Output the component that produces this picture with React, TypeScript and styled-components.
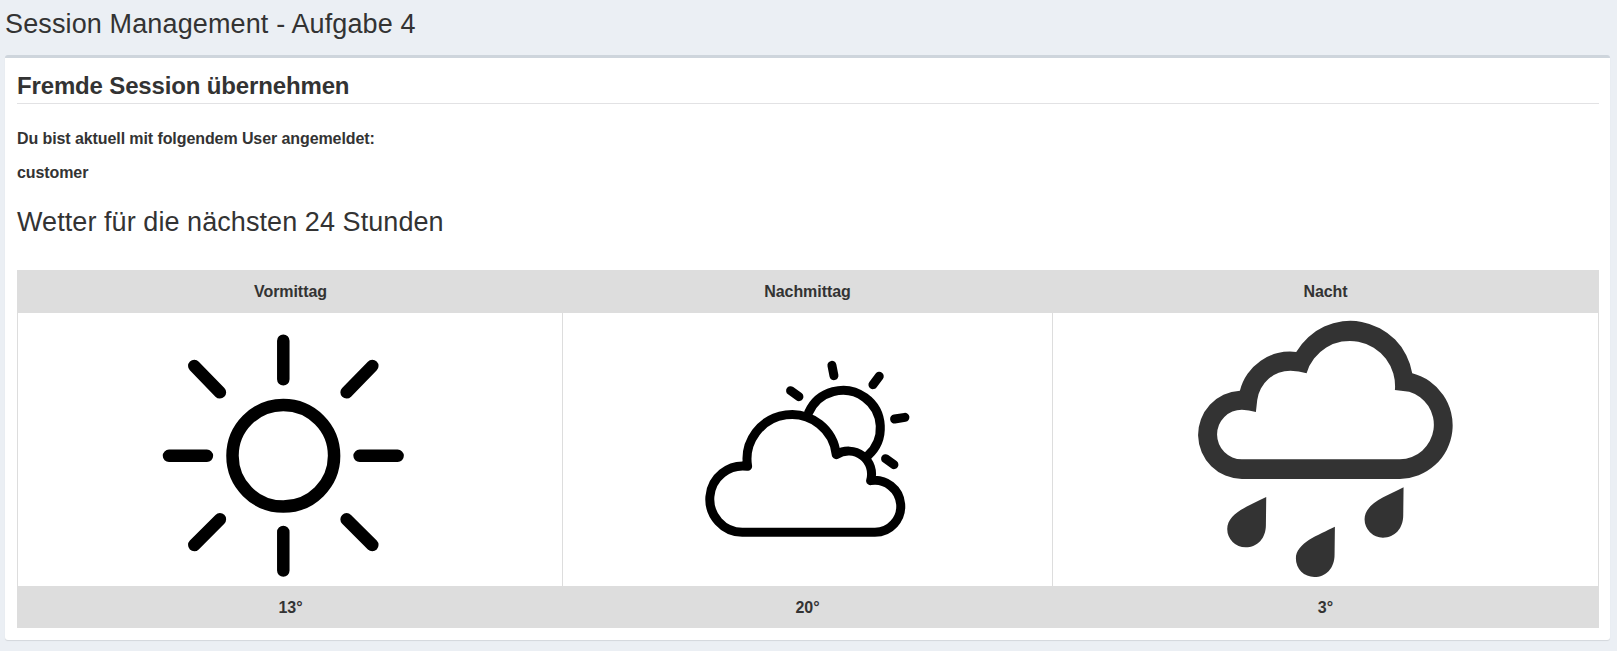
import React from "react";
import styled, { createGlobalStyle } from "styled-components";

const GlobalStyle = createGlobalStyle`
  * { box-sizing: border-box; }
  body {
    margin: 0;
    background: #ebeff4;
    color: #333;
    font: 16px/23px "Liberation Sans", Arial, sans-serif;
  }
`;

const Page = styled.main`
  display: flex;
  flex-direction: column;
  height: 651px;
  padding: 0 7px 11px 5px;
`;

const PageTitle = styled.h1`
  height: 55px;
  margin: 0;
  padding: 9px 0 0 0;
  font-size: 27px;
  font-weight: 400;
  letter-spacing: 0.13px;
  line-height: 30px;
`;

const Box = styled.section`
  flex: 1;
  padding: 12px 11px 0 12px;
  background: #fff;
  border-top: 3px solid #ced5dc;
  border-radius: 3px;
  box-shadow: 0 1px 1px rgba(0, 0, 0, 0.1);
`;

const BoxTitle = styled.h2`
  height: 34px;
  margin: 0 0 23px;
  border-bottom: 1px solid #e2e2e4;
  font-size: 24px;
  font-weight: 700;
  letter-spacing: -0.15px;
  line-height: 32px;
`;

const UserLine = styled.p`
  margin: 0 0 11px;
  font-weight: 700;
  letter-spacing: -0.09px;
`;

const WeatherTitle = styled.h2`
  height: 75px;
  margin: 0;
  padding-top: 12px;
  font-size: 27px;
  font-weight: 400;
  letter-spacing: 0.07px;
  line-height: 30px;
`;

const Table = styled.table`
  width: 100%;
  table-layout: fixed;
  border-collapse: separate;
  border-spacing: 0;
  border-left: 1px solid #ddd;
  border-right: 1px solid #ddd;
`;

const HeadCell = styled.th<{ $width?: number }>`
  width: ${(p) => (p.$width ? `${p.$width}px` : "auto")};
  height: 43px;
  padding: 0 0 0 1px;
  background: #ddd;
  letter-spacing: -0.06px;
`;

const IconCell = styled.td`
  height: 273px;
  padding: 0;
  text-align: center;
  & + & { border-left: 1px solid #ddd; }
  svg { display: block; margin: 0 auto; }
`;

const TemperatureCell = styled.td`
  height: 42px;
  padding: 0 0 0 1px;
  background: #ddd;
  font-weight: 700;
  text-align: center;
`;

const Sun = () => (
  <svg width="256" height="273" viewBox="162.4 313 256 273" fill="none" stroke="#000" strokeWidth="12.5" strokeLinecap="round">
    <circle cx="283.7" cy="455.8" r="50.8" />
    <path d="M283.7 340.7V379.3M283.7 532V570.6M169.4 455.8H207.3M360 455.8H398M194.7 366L220.3 392.3M372.7 366L347 392.3M194.7 545L220.3 519.3M372.7 545L347 519.3" />
  </svg>
);

const CloudSun = () => (
  <svg width="256" height="273" viewBox="680.4 313 256 273">
    <g transform="translate(690 340) scale(.33333)" fill="none" stroke="#000" strokeWidth="27" strokeLinecap="round" strokeLinejoin="round">
      <path d="M357 218A112.4 112.4 0 1 1 535 347" />
      <path d="M174 379A99.5 99.5 0 1 0 158 577H556A78 78 0 1 0 543 422A69 69 0 0 0 440 344A134.2 134.2 0 1 0 174 379Z" />
      <path d="M427 76L433 107M569 109L550 134M303 152L328 170M615 237L646 232M588 356L613 374" />
    </g>
  </svg>
);

const drop = "M259 561C210 586 142 609 142 657A55 55 0 0 0 197 712C233 712 258 685 258 645Z";

const Rain = () => (
  <svg width="260" height="273" viewBox="1196.1 313 260 273">
    <g transform="translate(1180 310) scale(.33333)" fill="#333">
      <path
        fillRule="evenodd"
        d="M180 242A132.6 132.6 0 0 0 186 507H660A161 161 0 0 0 697 190A188 188 0 0 0 349 126A155 155 0 0 0 180 242ZM228 306Q207 300 186 299A74.5 74.5 0 0 0 186 448H660A103.7 103.7 0 0 0 688 245L645 240A135.5 135.5 0 0 0 380 190Q357 183 332 182A101 101 0 0 0 232 270Z"
      />
      <path d={drop} />
      <path d={drop} transform="translate(206 89)" />
      <path d={drop} transform="translate(412 -29)" />
    </g>
  </svg>
);

const forecast = [
  { label: "Vormittag", temperature: "13°", Icon: Sun, width: 544 },
  { label: "Nachmittag", temperature: "20°", Icon: CloudSun, width: 490 },
  { label: "Nacht", temperature: "3°", Icon: Rain },
];

export default function App() {
  return (
    <>
      <GlobalStyle />
      <Page>
        <PageTitle>Session Management - Aufgabe 4</PageTitle>
        <Box>
          <BoxTitle>Fremde Session übernehmen</BoxTitle>
          <UserLine>Du bist aktuell mit folgendem User angemeldet:</UserLine>
          <UserLine>customer</UserLine>
          <WeatherTitle>Wetter für die nächsten 24 Stunden</WeatherTitle>
          <Table>
            <thead>
              <tr>
                {forecast.map((f) => (
                  <HeadCell key={f.label} $width={f.width}>{f.label}</HeadCell>
                ))}
              </tr>
            </thead>
            <tbody>
              <tr>
                {forecast.map(({ label, Icon }) => (
                  <IconCell key={label}><Icon /></IconCell>
                ))}
              </tr>
              <tr>
                {forecast.map((f) => (
                  <TemperatureCell key={f.label}>{f.temperature}</TemperatureCell>
                ))}
              </tr>
            </tbody>
          </Table>
        </Box>
      </Page>
    </>
  );
}
